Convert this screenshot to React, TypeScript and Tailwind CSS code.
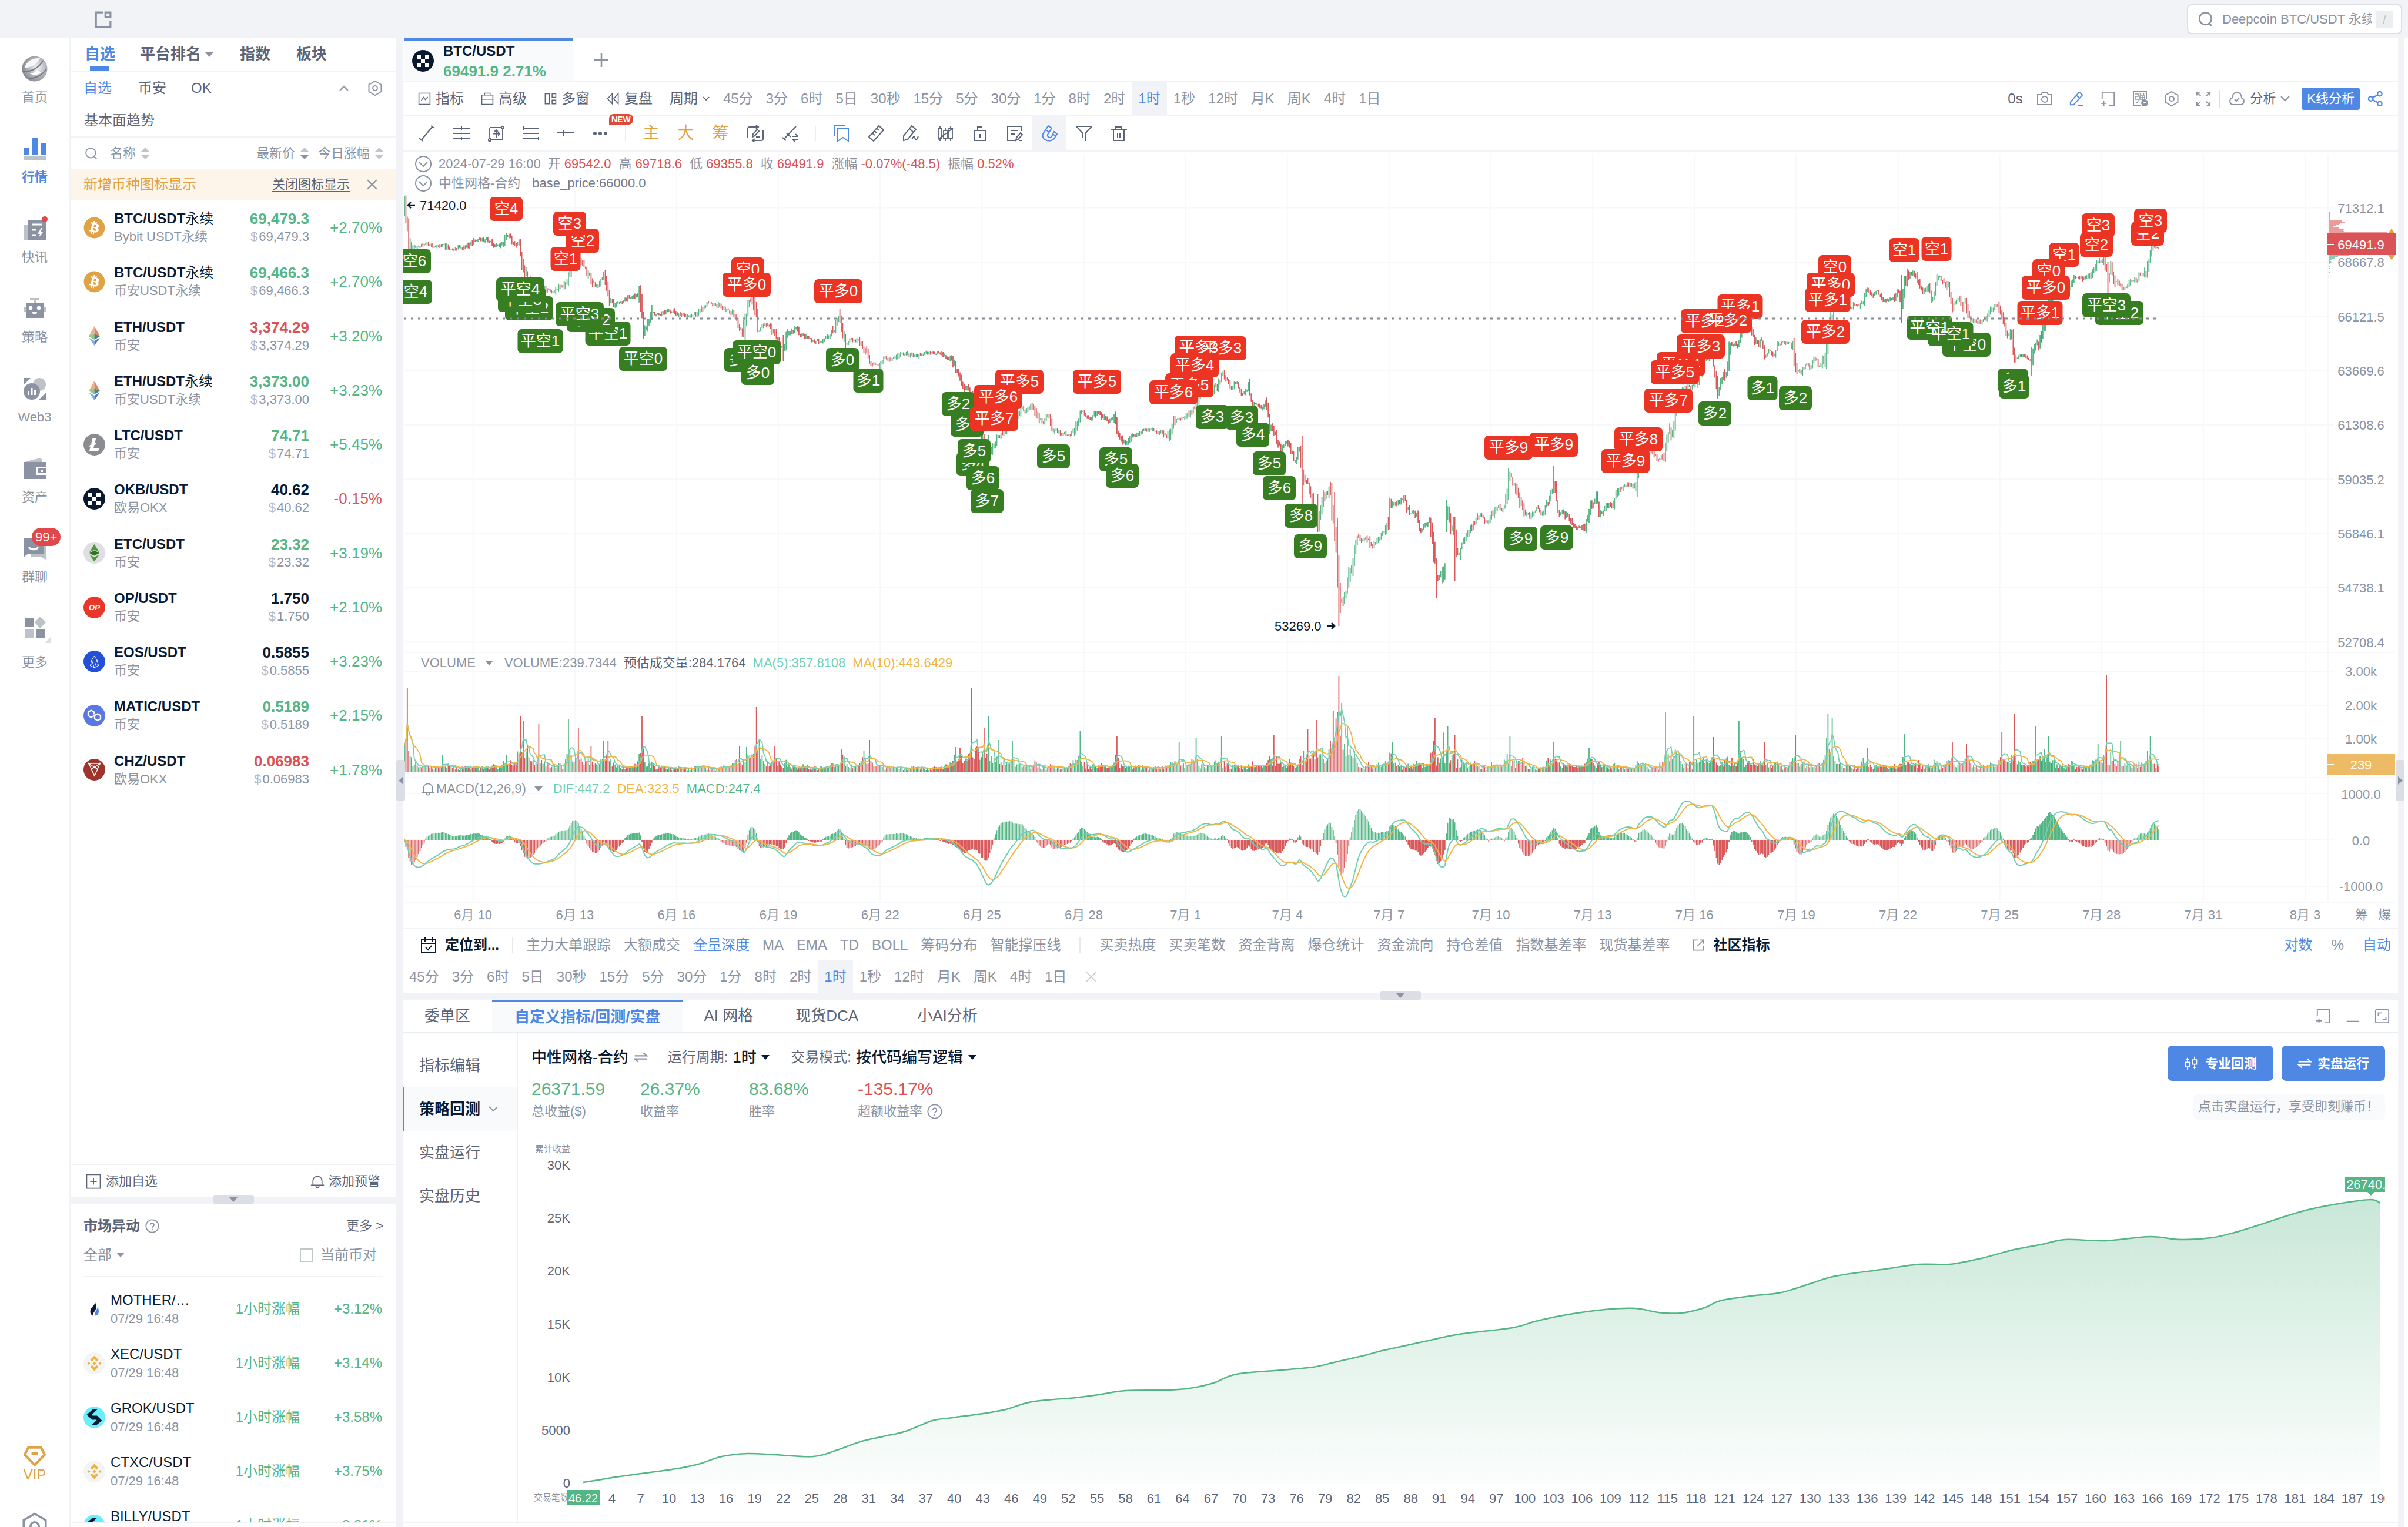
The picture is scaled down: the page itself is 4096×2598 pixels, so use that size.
import type { ReactNode } from "react"
import { FaBitcoin } from "react-icons/fa"

type Point = [number, number]

interface IconProps {
  children: ReactNode
  className?: string
  stroke?: number
  box?: number
}

// line icons share a 28 unit box
function Icon({ children, className = "size-7", stroke = 2, box = 28 }: IconProps) {
  return (
    <svg
      viewBox={`0 0 ${box} ${box}`}
      className={`shrink-0 ${className}`}
      fill="none"
      stroke="currentColor"
      strokeWidth={stroke}
      aria-hidden="true"
    >
      {children}
    </svg>
  )
}

function Caret({ className = "" }: { className?: string }) {
  return (
    <svg viewBox="0 0 14 8" className={`h-2 w-[14px] shrink-0 ${className}`} fill="currentColor" aria-hidden="true">
      <path d="M0 0h14L7 8z" />
    </svg>
  )
}

function Chevron({ className = "w-4" }: { className?: string }) {
  return (
    <svg viewBox="0 0 16 10" className={`h-[10px] shrink-0 ${className}`} fill="none" stroke="currentColor" strokeWidth={2} aria-hidden="true">
      <path d="M1 1l7 7 7-7" />
    </svg>
  )
}

function Sort({ down = false }: { down?: boolean }) {
  return (
    <svg viewBox="0 0 16 20" className="h-5 w-4 shrink-0" aria-hidden="true">
      <path d="M0 8h16L8 0z" fill="#c0c5ca" />
      <path d="M0 12h16l-8 8z" fill={down ? "#8b93a3" : "#c0c5ca"} />
    </svg>
  )
}

function HexIcon({ className = "size-7", stroke = 2 }: { className?: string; stroke?: number }) {
  return (
    <Icon className={className} stroke={stroke}>
      <path d="M14 2l10.500 6v12L14 26 3.500 20V8z" />
      <circle cx="14" cy="14" r="4" />
    </Icon>
  )
}

function HelpIcon({ className = "size-6" }: { className?: string }) {
  return (
    <Icon className={className}>
      <circle cx="14" cy="14" r="12.500" />
      <path d="M10.500 11.500a3.500 3.500 0 1 1 5 3.200c-1.200.6-1.500 1.300-1.500 2.600M14 19.500v2.200" />
    </Icon>
  )
}

function PopoutIcon({ className = "size-[26px]" }: { className?: string }) {
  return (
    <Icon className={className}>
      <path d="M3 14V2h22v24h-9M6 18v9M1 22.500h10" />
    </Icon>
  )
}

function BellIcon({ className = "size-6" }: { className?: string }) {
  return (
    <Icon className={className}>
      <path d="M5 21v-8a9 9 0 0 1 18 0v8M1 21.500h26M11 22v1.500a3 3 0 0 0 6 0V22" />
    </Icon>
  )
}

function Okx({ className = "size-[37px]" }: { className?: string }) {
  return (
    <svg viewBox="0 0 37 37" className={`shrink-0 ${className}`} aria-hidden="true">
      <circle cx="18.500" cy="18.500" r="18.500" fill="#0a1830" />
      <path fill="#fff" d="M8 8h7v7H8zM22 8h7v7h-7zM15 15h7v7h-7zM8 22h7v7H8zM22 22h7v7h-7z" />
    </svg>
  )
}

function CoinIcon({ coin }: { coin: string }) {
  if (coin === "btc") return <FaBitcoin className="size-[37px] shrink-0 text-[#dfa245]" aria-hidden="true" />
  if (coin === "okb") return <Okx />
  return (
    <svg viewBox="0 0 37 37" className="size-[37px] shrink-0" aria-hidden="true">
      {coin === "eth" && (
        <>
          <path d="M18.500 2L9 19l9.500-4z" fill="#eeb27a" />
          <path d="M18.500 2L28 19l-9.500-4z" fill="#e0826c" />
          <path d="M9 19l9.500-4v10z" fill="#8fc489" />
          <path d="M28 19l-9.500-4v10z" fill="#4e7f78" />
          <path d="M9 21.500l9.500 5.500v8z" fill="#6fb5e0" />
          <path d="M28 21.500L18.500 27v8z" fill="#5a6bd0" />
        </>
      )}
      {coin === "ltc" && (
        <>
          <circle cx="18.500" cy="18.500" r="18.500" fill="#8a8c92" />
          <path fill="#fff" d="M15.500 7h6l-2.300 9 2.600-1-.8 3-2.600 1-1.400 5.500h9.300l-1 4.500H10l2-7.500-2 .8.800-3 2-.8z" />
        </>
      )}
      {coin === "etc" && (
        <>
          <circle cx="18.500" cy="18.500" r="18.500" fill="#dfdfe3" />
          <path d="M18.500 4L10 17.500l8.500-4 8.500 4z" fill="#4c9a35" />
          <path d="M10 19l8.500-4.500L27 19l-8.500 4.500z" fill="#2f7321" />
          <path d="M10 21.500l8.500 4.500 8.500-4.500-8.500 12z" fill="#4c9a35" />
        </>
      )}
      {coin === "op" && (
        <>
          <circle cx="18.500" cy="18.500" r="18.500" fill="#e8362b" />
          <text x="18.500" y="23" textAnchor="middle" fontSize="13" fontWeight="700" fontStyle="italic" fill="#fff">
            OP
          </text>
        </>
      )}
      {coin === "eos" && (
        <>
          <circle cx="18.500" cy="18.500" r="18.500" fill="#2450d8" />
          <path
            d="M18.500 9L14 16l-2.500 9.500 7 3.500 7-3.500L23 16zM14 16l4.500 13L23 16M11.500 25.500L14 22M25.500 25.500L23 22"
            fill="none"
            stroke="#fff"
          />
        </>
      )}
      {coin === "matic" && (
        <>
          <circle cx="18.500" cy="18.500" r="18.500" fill="#5b78e0" />
          <path
            d="M18 16.500v-4L13 9.500l-5 3v6l5 3 11-6 5 3v5.500l-5 3-5-3v-4"
            fill="none"
            stroke="#fff"
            strokeWidth="2.300"
          />
        </>
      )}
      {coin === "chz" && (
        <>
          <circle cx="18.500" cy="18.500" r="18.500" fill="#9f342c" />
          <path d="M9 8h19l-9 21zM9 8l15 10M28 8L13.500 18M18.500 12.500L13.500 18l5 11 5.500-11z" fill="none" stroke="#fff" strokeWidth="1.300" />
          <circle cx="9" cy="8" r="1.500" fill="#fff" />
          <circle cx="28" cy="8" r="1.500" fill="#fff" />
        </>
      )}
      {coin === "huobi" && (
        <>
          <path d="M19.500 6c1 6-8 9-8 16.500 0 3.500 2 6 4.500 7-1-5 5.500-8 5.500-14 0-4-1-7.500-2-9.500z" fill="#0a1a33" />
          <path d="M24 15c-1 5-5.500 7.500-4.500 14.500 4 0 6.500-3 6.500-7.500 0-3-.8-5.500-2-7z" fill="#4f87e4" />
        </>
      )}
      {coin === "binance" && (
        <>
          <circle cx="18.500" cy="18.500" r="18.500" fill="#f3f4f5" />
          <path
            d="M18.500 5.500l7 7-3 3-4-4-4 4-3-3zM18.500 31.500l-7-7 3-3 4 4 4-4 3 3zM18.500 15.500l3 3-3 3-3-3zM9 16l2.500 2.500L9 21l-2.500-2.500zM28 16l2.500 2.500L28 21l-2.500-2.500z"
            fill="#eeb441"
          />
        </>
      )}
      {coin === "bitget" && (
        <>
          <circle cx="18.500" cy="18.500" r="18.500" fill="#6ceefa" />
          <path d="M15.500 5h8L14 14l8.500 8.500h-8L5.500 14zM21.500 32h-8l9-9-7.500-7.500h8l8.500 8.500z" fill="#0a1a33" />
        </>
      )}
    </svg>
  )
}

/* ---------- left rail ---------- */

const RAIL: { label: string; icon: ReactNode }[] = [
  {
    label: "首页",
    icon: (
      <svg viewBox="0 0 44 44" className="size-11" aria-hidden="true">
        <defs>
          <radialGradient id="globe" cx="0.6" cy="0.45" r="0.6">
            <stop offset="0" stopColor="#f4f4f6" />
            <stop offset="0.55" stopColor="#b7babf" />
            <stop offset="1" stopColor="#85888f" />
          </radialGradient>
        </defs>
        <circle cx="22" cy="22" r="21.500" fill="url(#globe)" />
        <path d="M5 20C8 9 18 3 31 4c-4 9-14 17-26 16z" fill="#f7f7f8" />
        <path d="M2 26c14 2 28-6 34-18M12 38c12 1 24-6 29-15" fill="none" stroke="#777a82" strokeWidth="2" />
        <path d="M14 30c6 0 9-3 12-6l7 4c-5 5-12 6-19 2z" fill="#fff" />
      </svg>
    ),
  },
  {
    label: "行情",
    icon: (
      <svg viewBox="0 0 38 38" className="size-[38px]" aria-hidden="true">
        <path fill="#4f87e4" d="M0 17h10v13H0zM14 1h11v29H14zM29 10h9v20h-9z" />
        <path fill="#bcc3c8" d="M0 32h38v6H0z" />
      </svg>
    ),
  },
  {
    label: "快讯",
    icon: (
      <svg viewBox="0 0 44 44" className="size-11" aria-hidden="true">
        <path fill="#bcc3c8" d="M4 15h8v27H4z" />
        <path fill="#8b93a3" d="M11 7h30v35H11z" />
        <path stroke="#fff" strokeWidth="3" d="M17 15h18M17 24h7M17 33h8" />
        <path fill="#fff" d="M33 21l-6 10h4l-2 6 7-9h-4l3-7z" />
        <circle cx="39" cy="6" r="5" fill="#e0484a" />
      </svg>
    ),
  },
  {
    label: "策略",
    icon: (
      <svg viewBox="0 0 38 38" className="size-[38px]" aria-hidden="true">
        <path fill="#bcc3c8" d="M11 1h16v4H11zM17 5h4v4h-4zM0 17h4v8H0zM34 17h4v8h-4z" />
        <path fill="#8b93a3" d="M4 9h30v26H4z" />
        <circle cx="12" cy="18" r="3.200" fill="#fff" />
        <circle cx="26" cy="18" r="3.200" fill="#fff" />
        <path fill="#fff" d="M15 25h8a4 4 0 0 1-8 0z" />
      </svg>
    ),
  },
  {
    label: "Web3",
    icon: (
      <svg viewBox="0 0 38 38" className="size-[38px]" aria-hidden="true">
        <circle cx="27" cy="12" r="11" fill="#bcc3c8" />
        <circle cx="14" cy="24" r="14" fill="#8b93a3" />
        <path fill="#8b93a3" d="M0 1h12L0 13zM38 26v12H26z" />
        <path fill="#fff" d="M7 23h3v7H7zM12.500 18h3v12h-3zM18 22h3v8h-3z" />
      </svg>
    ),
  },
  {
    label: "资产",
    icon: (
      <svg viewBox="0 0 38 38" className="size-[38px]" aria-hidden="true">
        <path fill="#bcc3c8" d="M4 7l26-6 2 7H4z" />
        <path fill="#8b93a3" d="M0 8h38v8H21v14h17v7H0z" />
        <path fill="#8b93a3" d="M24 19h14v8H24z" />
        <path fill="#fff" d="M29 21h4v4h-4z" />
      </svg>
    ),
  },
  {
    label: "群聊",
    icon: (
      <span className="relative">
        <svg viewBox="0 0 38 38" className="size-[38px]" aria-hidden="true">
          <path fill="#bcc3c8" d="M12 10h26v28l-8-4H12z" />
          <path fill="#8b93a3" d="M0 2h34v26H8l-8 6z" />
          <path d="M9 17c4 5 12 5 16 0" fill="none" stroke="#fff" strokeWidth="3" />
        </svg>
        <span className="absolute -top-4 left-[14px] rounded-full bg-[#e0484a] px-[6px] text-[22px] leading-[31px] text-white">
          99+
        </span>
      </span>
    ),
  },
  {
    label: "更多",
    icon: (
      <svg viewBox="0 0 56 48" className="h-12 w-14" aria-hidden="true">
        <path fill="#8b93a3" d="M11 6h15v15H11zM30 25h15v15H30z" />
        <path fill="#bcc3c8" d="M11 25h15v15H11zM37 3l10 10-10 10-9-10z" />
        <path fill="#dcdee4" d="M56 37v11H45z" />
      </svg>
    ),
  },
]

function Rail() {
  return (
    <nav className="flex w-[120px] shrink-0 flex-col items-center overflow-hidden border-r-2 border-[#f2f3f7] bg-white pt-[29px]">
      {RAIL.map((item) => (
        <a
          key={item.label}
          href="#"
          className={`flex h-[136px] shrink-0 flex-col items-center text-[22px] leading-[22px] ${
            item.label === "更多" ? "gap-[22px]" : "gap-4"
          } ${item.label === "行情" ? "font-bold text-[#4f87e4]" : "text-[#8b93a3]"}`}
        >
          <span className={`flex items-center ${item.label === "更多" ? "h-12" : "h-[45px]"}`}>{item.icon}</span>
          {item.label}
        </a>
      ))}
      <a href="#" className="mt-auto flex shrink-0 flex-col items-center text-2xl leading-[26px] text-[#dfa245]">
        <Icon className="size-[38px]" stroke={3}>
          <path d="M6 3.500h16l4.500 9L14 25.500 1.500 12.500zM10 11h8" />
        </Icon>
        VIP
      </a>
      <a href="#" aria-label="设置" className="mt-[50px] h-[26px] shrink-0 overflow-hidden text-[#8b93a3]">
        <HexIcon className="size-[50px]" stroke={2} />
      </a>
    </nav>
  )
}

/* ---------- watch list ---------- */

interface Coin {
  icon: string
  pair: string
  perp?: boolean
  venue: string
  price: string
  tone: "up" | "down" | "flat"
  change: string
}

const COINS: Coin[] = [
  { icon: "btc", pair: "BTC/USDT", perp: true, venue: "Bybit USDT永续", price: "69,479.3", tone: "up", change: "+2.70%" },
  { icon: "btc", pair: "BTC/USDT", perp: true, venue: "币安USDT永续", price: "69,466.3", tone: "up", change: "+2.70%" },
  { icon: "eth", pair: "ETH/USDT", venue: "币安", price: "3,374.29", tone: "down", change: "+3.20%" },
  { icon: "eth", pair: "ETH/USDT", perp: true, venue: "币安USDT永续", price: "3,373.00", tone: "up", change: "+3.23%" },
  { icon: "ltc", pair: "LTC/USDT", venue: "币安", price: "74.71", tone: "up", change: "+5.45%" },
  { icon: "okb", pair: "OKB/USDT", venue: "欧易OKX", price: "40.62", tone: "flat", change: "-0.15%" },
  { icon: "etc", pair: "ETC/USDT", venue: "币安", price: "23.32", tone: "up", change: "+3.19%" },
  { icon: "op", pair: "OP/USDT", venue: "币安", price: "1.750", tone: "flat", change: "+2.10%" },
  { icon: "eos", pair: "EOS/USDT", venue: "币安", price: "0.5855", tone: "flat", change: "+3.23%" },
  { icon: "matic", pair: "MATIC/USDT", venue: "币安", price: "0.5189", tone: "up", change: "+2.15%" },
  { icon: "chz", pair: "CHZ/USDT", venue: "欧易OKX", price: "0.06983", tone: "down", change: "+1.78%" },
]

const TONES = { up: "text-[#54b585]", down: "text-[#da5254]", flat: "text-[#0a1a33]" }

const ALERTS = [
  { icon: "huobi", pair: "MOTHER/…", change: "+3.12%" },
  { icon: "binance", pair: "XEC/USDT", change: "+3.14%" },
  { icon: "bitget", pair: "GROK/USDT", change: "+3.58%" },
  { icon: "binance", pair: "CTXC/USDT", change: "+3.75%" },
  { icon: "bitget", pair: "BILLY/USDT", change: "+3.21%" },
]

function Watchlist() {
  return (
    <section className="flex min-h-0 flex-1 flex-col bg-white">
      <div className="flex h-[57px] shrink-0 items-center border-b-2 border-[#f2f3f7] pl-6 text-[26px] font-bold text-[#5b6478]">
        <button className="relative flex h-full items-center text-[#4f87e4]">
          自选
          <span className="absolute bottom-0 left-[9px] h-[7px] w-[33px] bg-[#4f87e4]" />
        </button>
        <button className="ml-[42px] flex items-center gap-[7px]">
          平台排名 <Caret className="text-[#8b93a3]" />
        </button>
        <button className="ml-[45px]">指数</button>
        <button className="ml-[44px]">板块</button>
      </div>
      <div className="flex h-[56px] shrink-0 items-center pl-[22px] pr-[22px] text-2xl text-[#5b6478]">
        <button className="text-[#4f87e4]">自选</button>
        <button className="ml-[45px]">币安</button>
        <button className="ml-[42px]">OK</button>
        <button aria-label="收起" className="ml-auto text-[#8b93a3]">
          <Chevron className="w-[22px] rotate-180" />
        </button>
        <button aria-label="设置" className="ml-7 text-[#8b93a3]">
          <HexIcon />
        </button>
      </div>
      <div className="flex h-[56px] shrink-0 items-center border-b-2 border-[#f2f3f7] pl-[23px] text-2xl text-[#5b6478]">
        <button>基本面趋势</button>
      </div>
      <table className="w-full table-fixed">
        <colgroup>
          <col className="w-[278px]" />
          <col className="w-[128px]" />
          <col />
        </colgroup>
        <thead className="text-[22px] leading-[30px] text-[#8b93a3]">
          <tr className="h-[53px]">
            <th className="pl-[25px] font-normal">
              <span className="flex items-center">
                <Icon className="size-5" stroke={2.5}>
                  <circle cx="13" cy="13" r="11.500" />
                  <path d="M21 21l6 6" />
                </Icon>
                <span className="ml-[22px] mr-2">名称</span>
                <Sort />
              </span>
            </th>
            <th className="font-normal">
              <span className="flex items-center justify-end gap-2">
                最新价 <Sort down />
              </span>
            </th>
            <th className="pr-[21px] font-normal">
              <span className="flex items-center justify-end gap-2">
                今日涨幅 <Sort />
              </span>
            </th>
          </tr>
        </thead>
        <tbody>
          <tr className="h-[54px] bg-[#fdf5ea]">
            <td colSpan={3}>
              <span className="flex items-center pl-[22px] pr-[31px] text-2xl text-[#dfa245]">
                新增币种图标显示
                <button className="ml-auto text-[22px] leading-[30px] text-[#5b6478] underline underline-offset-4">
                  关闭图标显示
                </button>
                <button aria-label="关闭" className="ml-[28px] text-[#8b93a3]">
                  <Icon className="size-5" stroke={3}>
                    <path d="M3 3l22 22M25 3L3 25" />
                  </Icon>
                </button>
              </span>
            </td>
          </tr>
          {COINS.map((coin, i) => (
            <tr key={i} className="h-[92px] nth-[4n]:h-[93px]">
              <td className="pl-[22px]">
                <span className="flex items-center gap-[15px]">
                  <CoinIcon coin={coin.icon} />
                  <span className="whitespace-nowrap">
                    <span className="block text-2xl leading-8 font-bold text-[#0a1a33]">
                      {coin.pair}
                      {coin.perp && <span className="font-normal">永续</span>}
                    </span>
                    <span className="block text-[22px] leading-[30px] text-[#8b93a3]">{coin.venue}</span>
                  </span>
                </span>
              </td>
              <td className="text-right">
                <span className={`block text-[26px] leading-8 font-bold ${TONES[coin.tone]}`}>{coin.price}</span>
                <span className="block text-[22px] leading-[30px] text-[#8b93a3]">
                  <span className="mr-[2px] text-[#b4b9c3]">$</span>
                  {coin.price}
                </span>
              </td>
              <td
                className={`pr-6 text-right text-[26px] leading-8 ${
                  coin.change.startsWith("-") ? "text-[#da5254]" : "text-[#54b585]"
                }`}
              >
                {coin.change}
              </td>
            </tr>
          ))}
        </tbody>
      </table>
      <div className="mt-auto flex h-[57px] shrink-0 items-center justify-between border-t-2 border-[#f2f3f7] pl-[26px] pr-[27px] text-[22px] leading-[30px] text-[#5b6478]">
        <button className="flex items-center gap-2">
          <Icon className="size-[26px]">
            <path d="M1.500 1.500h25v25h-25zM14 8v12M8 14h12" />
          </Icon>
          添加自选
        </button>
        <button className="flex items-center gap-[7px]">
          <BellIcon />
          添加预警
        </button>
      </div>
    </section>
  )
}

function Handle() {
  return (
    <div className="relative h-[11px] shrink-0">
      <button
        aria-label="展开"
        className="absolute bottom-0 left-1/2 flex h-[15px] w-[70px] -translate-x-1/2 items-center justify-center rounded bg-[#dcdee5] text-[#8b93a3]"
      >
        <Caret />
      </button>
    </div>
  )
}

function MarketAlerts() {
  return (
    <section className="h-[542px] shrink-0 overflow-hidden bg-white px-[22px] pt-[18px]">
      <div className="flex h-10 items-center text-2xl font-bold text-[#5b6478]">
        市场异动
        <HelpIcon className="ml-[9px] size-6 text-[#8b93a3]" />
        <a href="#" className="ml-auto text-[22px] font-normal">
          更多 &gt;
        </a>
      </div>
      <div className="mt-2 flex h-[42px] items-center text-2xl text-[#8b93a3]">
        <label className="flex items-center gap-2">
          <select aria-label="筛选" className="appearance-none bg-transparent">
            <option>全部</option>
          </select>
          <Caret />
        </label>
        <label className="ml-auto flex items-center gap-3 pr-[11px]">
          <input type="checkbox" className="size-[23px] appearance-none border-2 border-[#c0c8c9]" />
          当前币对
        </label>
      </div>
      <ul className="mt-[15px] border-t-2 border-[#f2f3f7] pt-2">
        {ALERTS.map((alert) => (
          <li key={alert.pair} className="flex h-[92px] items-center">
            <CoinIcon coin={alert.icon} />
            <span className="ml-[9px]">
              <span className="block text-2xl leading-[33px] text-[#0a1a33]">{alert.pair}</span>
              <span className="block text-[22px] leading-8 text-[#8b93a3]">07/29 16:48</span>
            </span>
            <span className="ml-auto text-2xl text-[#54b585]">1小时涨幅</span>
            <span className="w-[142px] pr-[2px] text-right text-2xl text-[#54b585]">{alert.change}</span>
          </li>
        ))}
      </ul>
    </section>
  )
}

/* ---------- chart toolbars ---------- */

const FRAMES = [
  "45分", "3分", "6时", "5日", "30秒", "15分", "5分", "30分", "1分",
  "8时", "2时", "1时", "1秒", "12时", "月K", "周K", "4时", "1日",
]

function Frames() {
  return (
    <>
      {FRAMES.map((frame) => (
        <button
          key={frame}
          className={`h-full shrink-0 px-[11px] ${frame === "1时" ? "bg-[#f2f3f7] text-[#4f87e4]" : ""}`}
        >
          {frame}
        </button>
      ))}
    </>
  )
}

function ChartMenu() {
  return (
    <div className="flex h-[58px] shrink-0 items-center border-b-2 border-[#f2f3f7] pl-[26px] pr-[26px] text-2xl whitespace-nowrap text-[#8b93a3]">
      <div className="mr-3 flex items-center gap-[29px] text-[#5b6478]">
        <button className="flex items-center gap-2">
          <Icon className="size-[22px]">
            <path d="M2 2h24v24H2zM7 18l5-7 4 5 5-6" />
          </Icon>
          指标
        </button>
        <button className="flex items-center gap-2">
          <Icon className="size-[22px]">
            <path d="M2 6h24v20H2zM8 6V2h12v4M2 15h24" />
          </Icon>
          高级
        </button>
        <button className="flex items-center gap-2">
          <Icon className="size-[22px]">
            <path d="M3 3h9v22H3zM18 3h8v8h-8zM18 17h8v8h-8z" />
          </Icon>
          多窗
        </button>
        <button className="flex items-center gap-2">
          <Icon className="size-[22px]">
            <path d="M12 3L2 14l10 11zM25 3L15 14l10 11z" />
          </Icon>
          复盘
        </button>
        <button className="flex items-center gap-2">
          周期 <Chevron className="w-3" />
        </button>
      </div>
      <Frames />
      <span className="ml-auto w-[36px] text-[#5b6478]">0s</span>
      {TOP_ACTIONS.map((action) => (
        <button key={action.label} aria-label={action.label} className={`flex w-[54px] justify-center ${action.tone ?? ""}`}>
          {action.icon}
        </button>
      ))}
      <span className="mr-[14px] h-[30px] w-[2px] bg-[#dcdee5]" />
      <button className="mr-5 flex items-center gap-2 text-[22px] text-[#5b6478]">
        <Icon className="size-7 text-[#8b93a3]">
          <path d="M7 24a6 6 0 0 1-1-11.500C6 7 9.500 3 14 3s8 4 8 9.500A6 6 0 0 1 21 24zM10 15l3 3 5-6" />
        </Icon>
        分析
        <Chevron className="w-4 text-[#8b93a3]" />
      </button>
      <button className="mr-[13px] h-[38px] rounded bg-[#4f87e4] px-[9px] text-[22px] leading-[38px] text-white">K线分析</button>
      <button aria-label="分享" className="text-[#4f87e4]">
        <Icon className="size-[26px]" stroke={2.5}>
          <circle cx="6" cy="14" r="4" />
          <circle cx="22.500" cy="5" r="4" />
          <circle cx="22.500" cy="23" r="4" />
          <path d="M9.500 12L19 7M9.500 16l9.500 5" />
        </Icon>
      </button>
    </div>
  )
}

const TOP_ACTIONS: { label: string; tone?: string; icon: ReactNode }[] = [
  {
    label: "截图",
    icon: (
      <Icon>
        <path d="M2 7h6l2-4h8l2 4h6v17H2z" />
        <circle cx="14" cy="15" r="5" />
      </Icon>
    ),
  },
  {
    label: "画线",
    tone: "text-[#4f87e4]",
    icon: (
      <Icon className="size-[26px]">
        <path d="M3 20L19 2l6 5L9 25H3zM14 8l6 5M17 26h9" />
      </Icon>
    ),
  },
  { label: "弹出", icon: <PopoutIcon /> },
  {
    label: "弹幕",
    icon: (
      <Icon>
        <path d="M25 14V2H3v23h12" />
        <path d="M6 6h5v4H6v5h5c0 4-1 6-3 6M14 5l2 3M21 5l-2 3M14 9h8v6h-8zM14 12h8M18 9v9" strokeWidth="1.500" />
        <circle cx="22" cy="21" r="6" fill="currentColor" stroke="none" />
        <path d="M19 21h6" stroke="#fff" />
      </Icon>
    ),
  },
  { label: "设置", icon: <HexIcon /> },
  {
    label: "全屏",
    icon: (
      <Icon className="size-[26px]">
        <path d="M2 8V2h6M20 2h6v6M26 20v6h-6M8 26H2v-6M2 2l7 7M26 2l-7 7M26 26l-7-7M2 26l7-7" />
      </Icon>
    ),
  },
]

const DRAW_TOOLS: { label: string; icon?: ReactNode; text?: string; divider?: boolean; on?: boolean; blue?: boolean; isNew?: boolean }[] = [
  { label: "线段", icon: <path d="M5 25L23 3M1 22l6 5M21 1l6 4" /> },
  { label: "平行线", icon: <path d="M0 5h28M0 14h28M0 23h28M14 2v6M14 20v6" /> },
  {
    label: "矩形",
    icon: (
      <>
        <path d="M3 4h19M25 6v19H6M3 23V4M14 8v13M8 14.500h12M11 11l3-3 3 3M17 11.500l3 3-3 3" strokeWidth="1.800" />
        <circle cx="25" cy="4" r="2.200" />
        <circle cx="3" cy="25" r="2.200" />
      </>
    ),
  },
  { label: "通道", icon: <path d="M1 5h27M1 2v6M1 14h26M0 23h27M27 20v6" /> },
  { label: "水平线", icon: <path d="M0 13h28M11 8v10" /> },
  {
    label: "更多",
    isNew: true,
    icon: (
      <g fill="currentColor" stroke="none">
        <circle cx="5" cy="14" r="3" />
        <circle cx="14" cy="14" r="3" />
        <circle cx="23" cy="14" r="3" />
      </g>
    ),
  },
  { label: "主力", text: "主", divider: true },
  { label: "大单", text: "大" },
  { label: "筹码", text: "筹" },
  {
    label: "循环画线",
    icon: <path d="M1 22V6c0-2 1-3 3-3h14M15 0l4 3-4 3M27 8v15c0 2-1 3-3 3H10M13 23l-4 3 4 3M9 20l1-5 7-8 3 3-7 8zM15 20h6" />,
  },
  { label: "切换", icon: <path d="M3 24L24 2M8 14l7 6M1 21l6 5M17 19h10l-4-4M28 24H18l4 4" /> },
  { label: "书签", blue: true, divider: true, icon: <path d="M2 18V1h18M8 6h18v21l-9-6-9 6z" /> },
  { label: "标尺", icon: <path d="M2 20L19 1l8 7-17 19zM8 14l4 3M12 10l3 3M16 6l4 3" /> },
  { label: "画笔", icon: <path d="M2 26v-8L16 1l7 6L9 24zM12 6l7 6M16 24c2-4 4-6 5-3s2 6 4 2l2-4" /> },
  { label: "隐藏K线", icon: <path d="M2 5h6v18H2zM11 9h6v14h-6zM20 5h6v18h-6zM5 1v4M5 23v4M14 5v4M14 23v4M23 1v4M23 23v4M2 24L27 5" strokeWidth="1.800" /> },
  { label: "锁定", icon: <path d="M5 9h18v17H5zM10 9V3h8M14 15v6" /> },
  { label: "笔记", icon: <path d="M26 10V2H2v24h12M7 9h12M7 15h7M16 26l1-5 7-8 3 3-7 8zM21 26h6" /> },
  { label: "磁吸", on: true, blue: true, icon: <path d="M12 1l6 4-7 11c-1 4 4 7 7 3l4-8 5 4-5 8C16 30 0 26 3 15zM8 8l6 4M20 15l5 4" /> },
  { label: "筛选", icon: <path d="M1 2h26L17 13v14M1 2l10 11v9" /> },
  { label: "删除", icon: <path d="M0 8h28M5 8h18v18H5zM9 8V3h10v5M12 14v7M16 14v7" /> },
]

function DrawBar() {
  return (
    <div className="flex h-[60px] shrink-0 items-center border-b-2 border-[#f2f3f7] pl-[11px] text-[#5b6478]">
      {DRAW_TOOLS.map((tool) => (
        <div key={tool.label} className="flex h-full items-center">
          {tool.divider && <span className="mx-[13px] h-[26px] w-[2px] bg-[#e8efee]" />}
          <button
            aria-label={tool.label}
            className={`relative flex h-full w-[59px] items-center justify-center text-[28px] ${tool.on ? "bg-[#f2f3f7]" : ""} ${
              tool.blue ? "text-[#4f87e4]" : tool.text ? "text-[#dfa245]" : ""
            }`}
          >
            {tool.text ?? <Icon>{tool.icon}</Icon>}
            {tool.isNew && (
              <span className="absolute -top-1 left-[45px] rounded-lg rounded-bl-none bg-[#e0483c] px-1 text-sm leading-[18px] font-bold text-white">
                NEW
              </span>
            )}
          </button>
        </div>
      ))}
    </div>
  )
}

/* ---------- price chart ---------- */

const TRACK: Point[] = [
  [687, 352], [692, 373], [695, 409], [698, 420], [713, 418], [727, 415], [738, 420], [753, 418], [772, 424], [794, 419],
  [801, 413], [812, 407], [830, 409], [845, 418], [856, 415], [862, 400], [867, 404], [872, 415], [882, 415], [886, 438],
  [892, 460], [898, 477], [930, 493], [941, 497], [950, 487], [959, 489], [967, 469], [974, 442], [981, 431], [987, 453],
  [991, 447], [998, 460], [1006, 478], [1018, 489], [1028, 467], [1035, 504], [1044, 519], [1059, 511], [1070, 506], [1081, 504],
  [1088, 498], [1092, 530], [1095, 566], [1101, 555], [1108, 533], [1121, 535], [1143, 529], [1162, 537], [1180, 537], [1195, 524],
  [1202, 517], [1224, 519], [1235, 528], [1246, 531], [1256, 551], [1265, 570], [1270, 529], [1273, 508], [1283, 519], [1290, 566],
  [1298, 551], [1309, 555], [1320, 573], [1332, 595], [1338, 573], [1353, 559], [1364, 570], [1379, 579], [1393, 582], [1408, 573],
  [1419, 560], [1428, 537], [1432, 559], [1438, 584], [1452, 577], [1463, 584], [1474, 602], [1482, 619], [1496, 621], [1504, 610],
  [1519, 612], [1533, 602], [1559, 606], [1577, 601], [1600, 602], [1618, 613], [1633, 643], [1640, 657], [1653, 672], [1662, 697],
  [1669, 745], [1678, 781], [1686, 767], [1695, 748], [1706, 737], [1714, 727], [1728, 716], [1736, 694], [1747, 701], [1754, 686],
  [1761, 705], [1773, 719], [1782, 705], [1791, 730], [1806, 736], [1820, 741], [1830, 723], [1839, 700], [1848, 707], [1856, 713],
  [1867, 700], [1878, 709], [1885, 719], [1894, 707], [1900, 735], [1909, 750], [1918, 754], [1926, 742], [1948, 731], [1970, 735],
  [1990, 742], [1997, 711], [2014, 711], [2029, 696], [2043, 672], [2058, 669], [2073, 653], [2080, 634], [2087, 651], [2095, 661],
  [2104, 649], [2113, 670], [2124, 657], [2129, 688], [2139, 684], [2146, 696], [2154, 686], [2159, 723], [2165, 735], [2172, 746],
  [2179, 766], [2187, 750], [2194, 758], [2202, 785], [2211, 758], [2215, 820], [2221, 812], [2227, 832], [2235, 867], [2242, 902],
  [2248, 847], [2253, 843], [2262, 836], [2268, 886], [2274, 944], [2277, 1022], [2280, 1018], [2286, 1022], [2292, 983], [2301, 956],
  [2308, 909], [2316, 921], [2325, 913], [2334, 933], [2345, 915], [2360, 898], [2365, 859], [2375, 859], [2387, 847], [2397, 871],
  [2408, 873], [2417, 906], [2426, 890], [2434, 894], [2439, 937], [2444, 991], [2452, 968], [2458, 952], [2461, 867], [2467, 894],
  [2474, 898], [2478, 956], [2485, 929], [2496, 910], [2503, 898], [2518, 875], [2529, 890], [2537, 878], [2548, 859], [2559, 871],
  [2567, 808], [2572, 816], [2581, 836], [2592, 871], [2603, 878], [2614, 863], [2623, 875], [2636, 851], [2643, 816], [2651, 875],
  [2658, 867], [2669, 886], [2680, 898], [2695, 898], [2704, 867], [2715, 843], [2721, 878], [2732, 863], [2746, 855], [2752, 832],
  [2768, 824], [2781, 828], [2785, 797], [2795, 774], [2808, 767], [2820, 781], [2831, 774], [2839, 727], [2844, 738], [2849, 712],
  [2858, 661], [2876, 657], [2889, 646], [2899, 617], [2912, 595], [2918, 646], [2922, 668], [2930, 635], [2937, 632], [2941, 595],
  [2950, 584], [2956, 595], [2963, 559], [2973, 551], [2981, 573], [2991, 588], [2996, 577], [3001, 606], [3009, 595], [3016, 608],
  [3024, 584], [3035, 584], [3048, 584], [3053, 624], [3062, 635], [3073, 617], [3079, 628], [3086, 606], [3094, 624], [3105, 610],
  [3108, 581], [3114, 537], [3125, 526], [3138, 528], [3154, 519], [3167, 519], [3175, 493], [3185, 504], [3193, 495], [3206, 511],
  [3222, 509], [3229, 493], [3234, 522], [3239, 486], [3245, 466], [3255, 467], [3261, 478], [3271, 497], [3279, 486], [3285, 511],
  [3292, 489], [3297, 467], [3303, 482], [3313, 486], [3321, 522], [3333, 508], [3338, 529], [3342, 504], [3349, 544], [3362, 548],
  [3371, 548], [3381, 537], [3391, 522], [3397, 519], [3407, 537], [3415, 566], [3422, 566], [3426, 610], [3436, 606], [3446, 606],
  [3456, 617], [3459, 588], [3469, 584], [3475, 551], [3485, 515], [3501, 497], [3520, 489], [3529, 471], [3543, 475], [3559, 467],
  [3569, 446], [3580, 446], [3586, 478], [3590, 449], [3595, 478], [3605, 486], [3614, 493], [3624, 475], [3634, 478], [3640, 464],
  [3650, 466], [3656, 435], [3661, 420], [3673, 420],
]

// bars that reach well past their neighbours: x, high, low
const WICKS: [number, number, number][] = [
  [1095, 530, 577], [1108, 519, 545], [1265, 545, 574], [1333, 570, 614], [1428, 525, 550], [1682, 740, 800], [2215, 742, 870],
  [2242, 840, 905], [2277, 944, 1065], [2281, 992, 1043], [2444, 950, 1018], [2461, 850, 905], [2474, 880, 989], [2567, 796, 851],
  [2643, 792, 838], [2785, 795, 845], [2922, 640, 679], [3115, 500, 545], [3234, 468, 549], [3456, 590, 639], [3586, 446, 505],
]

// x, top, r = down bar, g = up bar
const VOLUME_PEAKS: [number, number, "r" | "g"][] = [
  [693, 1170, "r"], [752, 1285, "g"], [860, 1285, "g"], [884, 1219, "r"], [891, 1227, "r"], [897, 1269, "r"], [917, 1232, "r"],
  [968, 1224, "g"], [983, 1238, "r"], [1005, 1270, "r"], [1026, 1260, "r"], [1034, 1260, "r"], [1093, 1219, "r"], [1259, 1270, "r"],
  [1271, 1271, "g"], [1287, 1203, "r"], [1291, 1260, "g"], [1319, 1270, "r"], [1432, 1275, "r"], [1469, 1277, "g"], [1478, 1259, "r"],
  [1625, 1271, "g"], [1632, 1272, "r"], [1653, 1171, "r"], [1673, 1238, "r"], [1680, 1218, "g"], [1697, 1259, "g"], [1723, 1260, "g"],
  [1837, 1243, "g"], [1900, 1252, "r"], [2005, 1262, "g"], [2035, 1256, "g"], [2078, 1252, "g"], [2168, 1250, "r"], [2225, 1240, "r"],
  [2238, 1225, "r"], [2269, 1210, "r"], [2277, 1150, "r"], [2282, 1196, "g"], [2292, 1235, "g"], [2370, 1262, "g"], [2442, 1222, "r"],
  [2462, 1236, "g"], [2474, 1250, "r"], [2568, 1252, "g"], [2643, 1262, "g"], [2704, 1272, "g"], [2834, 1212, "g"], [2881, 1218, "g"],
  [2915, 1254, "r"], [2957, 1226, "g"], [3002, 1262, "r"], [3054, 1250, "r"], [3109, 1214, "g"], [3116, 1222, "g"], [3177, 1272, "g"],
  [3239, 1248, "g"], [3322, 1262, "r"], [3345, 1266, "r"], [3404, 1246, "r"], [3427, 1214, "r"], [3462, 1236, "g"], [3485, 1252, "g"],
  [3568, 1266, "g"], [3584, 1148, "r"], [3606, 1260, "g"], [3652, 1277, "g"], [3657, 1253, "g"],
]

const STEP = 173.13 / 72
const VOLUME_BASE = 1314
const MACD_BASE = 1429

function seeded(seed: number) {
  let s = seed
  return () => {
    s = (s * 16807) % 2147483647
    return s / 2147483647
  }
}

function trackAt(x: number) {
  let i = 1
  while (i < TRACK.length - 1 && TRACK[i][0] < x) i++
  const [x0, y0] = TRACK[i - 1]
  const [x1, y1] = TRACK[i]
  return y0 + ((y1 - y0) * (x - x0)) / (x1 - x0)
}

// the price scale is logarithmic
const toPrice = (y: number) => 71312.1 * Math.exp(-0.00040926 * (y - 353.6))

function ema(values: number[], span: number) {
  const k = 2 / (span + 1)
  let last = values[0]
  return values.map((v) => (last = v * k + last * (1 - k)))
}

function average(values: number[], span: number) {
  return values.map((_, i) => {
    const part = values.slice(Math.max(0, i - span + 1), i + 1)
    return part.reduce((a, b) => a + b, 0) / part.length
  })
}

function buildChart() {
  const random = seeded(4711)
  const count = Math.floor((3673 - 687) / STEP) + 1
  const xs = Array.from({ length: count }, (_, i) => 688 + i * STEP)
  let up = ""
  let down = ""
  let volUp = ""
  let volDown = ""
  let last = trackAt(688)
  const closes: number[] = []
  const volumes: number[] = []
  xs.forEach((x) => {
    const slope = Math.abs(trackAt(x + 6) - trackAt(x - 6))
    const amp = 3 + slope * 0.22
    const close = trackAt(x) + (random() - 0.5) * amp * 1.4
    let high = Math.min(last, close) - random() * amp
    let low = Math.max(last, close) + random() * amp
    const wick = WICKS.find((w) => Math.abs(w[0] - x) <= STEP / 2)
    if (wick) {
      high = wick[1]
      low = wick[2]
    }
    const isUp = close < last
    const bar = `M${x.toFixed(1)} ${high.toFixed(1)}V${low.toFixed(1)}`
    if (isUp) up += bar
    else down += bar

    const peak = VOLUME_PEAKS.find((p) => Math.abs(p[0] - x) <= STEP / 2)
    let volume = 3 + random() * 7 + slope * 0.5 * random()
    VOLUME_PEAKS.forEach((p) => {
      volume += (VOLUME_BASE - p[1]) * 0.22 * random() * Math.exp(-Math.abs(p[0] - x) / 12)
    })
    if (peak) volume = VOLUME_BASE - peak[1]
    const volumeBar = `M${x.toFixed(1)} ${VOLUME_BASE}v${(-volume).toFixed(1)}`
    if (peak ? peak[2] === "g" : isUp) volUp += volumeBar
    else volDown += volumeBar

    closes.push(toPrice(close))
    volumes.push(volume)
    last = close
  })

  const fast = ema(closes, 12)
  const slow = ema(closes, 26)
  const dif = fast.map((v, i) => v - slow[i])
  const dea = ema(dif, 9)
  const scale = 0.0785
  let histUp = ""
  let histDown = ""
  dif.forEach((v, i) => {
    const h = (v - dea[i]) * 2 * scale
    if (h >= 0) histUp += `M${xs[i].toFixed(1)} ${MACD_BASE}v${(-h - 1).toFixed(1)}`
    else histDown += `M${xs[i].toFixed(1)} ${MACD_BASE + 1}v${(-h + 1).toFixed(1)}`
  })
  const line = (values: number[], base: number, k: number) =>
    "M" + values.map((v, i) => `${xs[i].toFixed(1)} ${(base - v * k).toFixed(1)}`).join("L")

  return {
    up,
    down,
    volUp,
    volDown,
    histUp,
    histDown,
    ma5: line(average(volumes, 5), VOLUME_BASE, 1),
    ma10: line(average(volumes, 10), VOLUME_BASE, 1),
    dif: line(dif, MACD_BASE, scale),
    dea: line(dea, MACD_BASE, scale),
  }
}

const CHART = buildChart()

const DATES = [
  "6月 10", "6月 13", "6月 16", "6月 19", "6月 22", "6月 25", "6月 28", "7月 1", "7月 4", "7月 7",
  "7月 10", "7月 13", "7月 16", "7月 19", "7月 22", "7月 25", "7月 28", "7月 31", "8月 3",
]

const PRICES = ["71312.1", "68667.8", "66121.5", "63669.6", "61308.6", "59035.2", "56846.1", "54738.1", "52708.4"]

const LOWER_AXIS: [string, number][] = [
  ["3.00k", 1142], ["2.00k", 1200], ["1.00k", 1257], ["1000.0", 1351], ["0.0", 1430], ["-1000.0", 1508],
]

// label, centre x, centre y, kind: s = sell, b = buy, t = caption only; painted in order
const MARKS: [string, number, number, "s" | "b" | "t"][] = [
  ["空4", 861, 355, "s"], ["空2", 991, 409, "s"], ["空3", 969, 380, "s"], ["空1", 962, 440, "s"],
  ["平空6", 692, 444, "b"], ["平空4", 694, 496, "b"],
  ["平空2", 900, 524, "b"], ["平空3", 888, 510, "b"], ["平空4", 885, 492, "b"], ["平空1", 919, 580, "b"],
  ["平空1", 1034, 567, "b"], ["平空2", 1005, 544, "b"], ["平空3", 986, 534, "b"], ["平空0", 1094, 610, "b"],
  ["空0", 1272, 458, "s"], ["平多0", 1270, 484, "s"], ["平多0", 1426, 495, "s"],
  ["多0", 1260, 612, "b"], ["多0", 1289, 634, "b"], ["平空0", 1287, 599, "b"],
  ["多0", 1433, 612, "b"], ["多1", 1477, 647, "b"],
  ["多2", 1630, 687, "b"], ["多3", 1645, 722, "b"], ["多4", 1655, 789, "b"], ["多5", 1657, 767, "b"],
  ["多6", 1672, 813, "b"], ["多7", 1679, 852, "b"],
  ["平多5", 1734, 649, "s"], ["平多6", 1698, 675, "s"], ["平多7", 1691, 712, "s"], ["多5", 1792, 776, "b"],
  ["平多5", 1866, 649, "s"], ["多5", 1898, 781, "b"], ["多6", 1909, 809, "b"],
  ["平多3", 2039, 591, "s"], ["平多3", 2079, 592, "s"], ["平多3", 2039, 591, "t"],
  ["平多5", 2023, 655, "s"], ["平多4", 2032, 621, "s"], ["平多6", 1996, 667, "s"],
  ["多3", 2062, 709, "b"], ["多3", 2112, 710, "b"], ["多4", 2131, 739, "b"],
  ["多5", 2159, 788, "b"], ["多6", 2176, 830, "b"], ["多8", 2213, 877, "b"], ["多9", 2229, 929, "b"],
  ["平多9", 2566, 761, "s"], ["平多9", 2643, 756, "s"], ["多9", 2587, 916, "b"], ["多9", 2648, 914, "b"],
  ["平多8", 2787, 747, "s"], ["平多9", 2765, 784, "s"], ["平多7", 2838, 681, "s"],
  ["平多4", 2859, 619, "s"], ["平多5", 2849, 633, "s"], ["平多3", 2893, 589, "s"],
  ["平多1", 2960, 521, "s"], ["平多2", 2900, 546, "s"], ["平多2", 2939, 545, "s"], ["平多2", 2900, 546, "t"],
  ["多2", 2917, 703, "b"], ["多1", 2998, 660, "b"], ["多2", 3054, 677, "b"],
  ["空0", 3121, 454, "s"], ["平多0", 3114, 484, "s"], ["平多1", 3109, 510, "s"], ["平多2", 3105, 564, "s"],
  ["空1", 3239, 425, "s"], ["空1", 3294, 423, "s"],
  ["平空0", 3345, 586, "b"], ["平空1", 3282, 557, "b"], ["平空1", 3318, 568, "b"], ["平空1", 3282, 557, "t"],
  ["多1", 3424, 647, "b"], ["多1", 3426, 657, "b"],
  ["空1", 3511, 433, "s"], ["空0", 3485, 461, "s"], ["平多0", 3480, 489, "s"], ["平多1", 3470, 532, "s"],
  ["空3", 3569, 383, "s"], ["空2", 3566, 416, "s"], ["空2", 3653, 397, "s"], ["空3", 3658, 375, "s"],
  ["平空2", 3605, 532, "b"], ["平空3", 3583, 519, "b"],
]

function Mark({ mark }: { mark: (typeof MARKS)[number] }) {
  const [label, x, y, kind] = mark
  const width = (label.length === 3 ? 82 : 56) - (label.endsWith("1") ? 5 : 0)
  return (
    <g>
      {kind !== "t" && (
        <rect x={x - width / 2} y={y - 20} width={width} height={41} rx={7} fill={kind === "s" ? "#eb3424" : "#377d22"} />
      )}
      <text x={x} y={y + 9} fontSize={26} textAnchor="middle" fill="#fff">
        {label}
      </text>
    </g>
  )
}

const ASKS = [2, 2, 2, 2, 2, 2, 2, 22, 27, 20, 18, 12, 8, 17, 26, 24, 26, 30]
const BIDS = [34, 16, 10, 5, 3, 4, 5, 3, 1, 2, 1, 3, 1, 1, 2, 1, 1]

function PriceChart() {
  return (
    <div className="relative shrink-0 text-[22px] leading-[30px]">
      <svg viewBox="685 258 3394 1321" className="w-full" role="img" aria-label="BTC/USDT K线图">
        <g stroke="#f7f8fa" strokeWidth={2}>
          {DATES.map((date, i) => (
            <path key={date} d={`M${804.7 + i * 173.13} 262V1535`} />
          ))}
          <path d="M3960 262V1535" />
          {PRICES.map((price, i) => (
            <path key={price} d={`M687 ${353.6 + i * 92.33}H3968`} />
          ))}
          {[1142, 1200, 1257, 1350, 1429, 1508].map((y) => (
            <path key={y} d={`M687 ${y}H3968`} />
          ))}
          {[1110, 1323, 1535].map((y) => (
            <path key={y} d={`M687 ${y}H4076`} />
          ))}
        </g>
        <g fill="none" strokeWidth={1.8}>
          <path d={CHART.up} stroke="#54b585" />
          <path d={CHART.down} stroke="#da5a5c" />
          <path d={CHART.volUp} stroke="#54b585" />
          <path d={CHART.volDown} stroke="#da5a5c" />
          <path d={CHART.histUp} stroke="#54b585" />
          <path d={CHART.histDown} stroke="#da5a5c" />
          <path d={CHART.ma5} stroke="#6fcfb3" />
          <path d={CHART.ma10} stroke="#f2b544" />
          <path d={CHART.dif} stroke="#6fcfb3" strokeWidth={2} />
          <path d={CHART.dea} stroke="#f2b544" strokeWidth={2} />
        </g>
        <g fontSize={22} fill="#0a1a33">
          <text x={714} y={357}>71420.0</text>
          <text x={2168} y={1073}>53269.0</text>
          <path d="M706 349H694M699 344l-5 5 5 5M2258 1065h12M2265 1060l5 5-5 5" fill="none" stroke="#0a1a33" strokeWidth={2.5} />
        </g>
        {MARKS.map((mark, i) => (
          <Mark key={i} mark={mark} />
        ))}
        <path d="M687 542H3673" stroke="#85888f" strokeWidth={3} strokeDasharray="4 8" />

        <g fontSize={22} fill="#8b93a3" textAnchor="middle">
          {PRICES.map((price, i) => (
            <text key={price} x={4016} y={362 + i * 92.33}>
              {price}
            </text>
          ))}
          {LOWER_AXIS.map(([label, y]) => (
            <text key={label} x={4016} y={y + 8}>
              {label}
            </text>
          ))}
          {DATES.map((date, i) => (
            <text key={date} x={804.7 + i * 173.13} y={1564}>
              {date}
            </text>
          ))}
          <text x={4017} y={1564}>筹</text>
          <text x={4056} y={1564}>爆</text>
        </g>
        <g fill="#ea9c9d">
          {ASKS.map((w, i) => (
            <rect key={i} x={3961} y={361 + i * 2} width={w} height={2} />
          ))}
        </g>
        <rect x={3961} y={394} width={100} height={3} fill="#ea9c9d" />
        <g fill="#86d0b4">
          {BIDS.map((w, i) => (
            <rect key={i} x={3961} y={434 + i * 2} width={w} height={2} />
          ))}
        </g>
        <path d="M4062 397l6-8 6 8zM4062 434l6 8 6-8z" fill="#dfa245" />
        <rect x={3959} y={397} width={117} height={37} fill="#da5457" />
        <rect x={3959} y={1282} width={115} height={36} fill="#edbb65" />
        <path d="M3959 416h11M3959 1301h11" stroke="#fff" strokeWidth={2} />
        <g fontSize={22} fill="#fff" textAnchor="middle">
          <text x={4016} y={424}>69491.9</text>
          <text x={4016} y={1309}>239</text>
        </g>
      </svg>

      <div className="absolute top-[6px] left-[21px] flex items-center whitespace-nowrap text-[#8b93a3]">
        <LegendToggle />
        <span className="ml-3 mr-3">2024-07-29 16:00</span>
        {QUOTE.map(([name, value]) => (
          <span key={name} className="mr-[13px]">
            {name} <span className="text-[#da5254]">{value}</span>
          </span>
        ))}
      </div>
      <div className="absolute top-[39px] left-[21px] flex items-center whitespace-nowrap text-[#8b93a3]">
        <LegendToggle />
        <span className="ml-3 mr-5">中性网格-合约</span>
        <span className="text-[#767c89]">base_price:66000.0</span>
      </div>
      <div className="absolute top-[64.7%] left-[31px] flex items-center whitespace-nowrap text-[#8b93a3]">
        VOLUME
        <Caret className="ml-4 mr-[19px]" />
        VOLUME:239.7344
        <span className="ml-3 text-[#5b6478]">预估成交量:284.1764</span>
        <span className="ml-3 text-[#6fcfb3]">MA(5):357.8108</span>
        <span className="ml-3 text-[#f2b544]">MA(10):443.6429</span>
      </div>
      <div className="absolute top-[80.9%] left-[31px] flex items-center whitespace-nowrap text-[#8b93a3]">
        <BellIcon className="mr-[2px] size-6" />
        MACD(12,26,9)
        <Caret className="ml-[14px] mr-[18px]" />
        <span className="text-[#6fcfb3]">DIF:447.2</span>
        <span className="ml-3 text-[#f2b544]">DEA:323.5</span>
        <span className="ml-3 text-[#54b585]">MACD:247.4</span>
      </div>
    </div>
  )
}

const QUOTE = [
  ["开", "69542.0"],
  ["高", "69718.6"],
  ["低", "69355.8"],
  ["收", "69491.9"],
  ["涨幅", "-0.07%(-48.5)"],
  ["振幅", "0.52%"],
]

function LegendToggle() {
  return (
    <button aria-label="展开">
      <Icon>
        <circle cx="14" cy="14" r="13" />
        <path d="M7 11l7 7 7-7" />
      </Icon>
    </button>
  )
}

const INDICATORS = ["主力大单跟踪", "大额成交", "全量深度", "MA", "EMA", "TD", "BOLL", "筹码分布", "智能撑压线"]
const DATA_INDICATORS = ["买卖热度", "买卖笔数", "资金背离", "爆仓统计", "资金流向", "持仓差值", "指数基差率", "现货基差率"]

function IndicatorBar() {
  return (
    <div className="shrink-0 border-t-2 border-[#f2f3f7] text-2xl whitespace-nowrap text-[#8b93a3]">
      <div className="flex h-[53px] items-center gap-[22px] pl-[30px] pr-3">
        <button className="flex items-center gap-[14px] font-bold text-[#0a1a33]">
          <Icon className="size-7">
            <path d="M2 5h24v21H2zM2 11h24M8 1v7M20 1v7M9 18l4 4 6-7" />
          </Icon>
          定位到...
        </button>
        <span className="h-[26px] w-[2px] bg-[#e6e9ee]" />
        {INDICATORS.map((name) => (
          <button key={name} className={name === "全量深度" ? "text-[#4f87e4]" : ""}>
            {name}
          </button>
        ))}
        <span className="mx-[10px] h-[26px] w-[2px] bg-[#e6e9ee]" />
        {DATA_INDICATORS.map((name) => (
          <button key={name}>{name}</button>
        ))}
        <button className="ml-4 flex items-center gap-[14px] font-bold text-[#0a1a33]">
          <Icon className="size-[22px] text-[#8b93a3]">
            <path d="M12 3H3v22h22v-9M12 16L25 3M17 3h8v8" />
          </Icon>
          社区指标
        </button>
        <button className="ml-auto text-[#4f87e4]">对数</button>
        <button className="mx-[10px]">%</button>
        <button className="text-[#4f87e4]">自动</button>
      </div>
      <div className="flex h-[56px] items-center">
        <Frames />
        <button aria-label="关闭" className="ml-5 text-[#c0c5ca]">
          <Icon className="size-5">
            <path d="M3 3l22 22M25 3L3 25" />
          </Icon>
        </button>
      </div>
    </div>
  )
}

/* ---------- back test ---------- */

const EQUITY: Point[] = [
  [992, 2523], [1024, 2518], [1041, 2515], [1076, 2510], [1149, 2500], [1188, 2492], [1228, 2479], [1272, 2474], [1319, 2476], [1384, 2479],
  [1424, 2468], [1463, 2454], [1502, 2445], [1541, 2436], [1586, 2418], [1620, 2413], [1672, 2406], [1711, 2399], [1755, 2386], [1829, 2379],
  [1868, 2374], [1915, 2367], [1985, 2366], [2024, 2363], [2064, 2354], [2103, 2339], [2181, 2332], [2233, 2327], [2273, 2318], [2325, 2306],
  [2351, 2299], [2429, 2282], [2482, 2271], [2573, 2260], [2612, 2249], [2664, 2238], [2730, 2229], [2782, 2227], [2821, 2234], [2860, 2235],
  [2899, 2226], [2926, 2214], [2978, 2206], [3030, 2200], [3082, 2184], [3122, 2172], [3200, 2161], [3265, 2152], [3317, 2152], [3370, 2142],
  [3422, 2128], [3474, 2118], [3513, 2110], [3579, 2112], [3657, 2105], [3709, 2110], [3761, 2107], [3801, 2098], [3840, 2086], [3892, 2069],
  [3931, 2058], [3984, 2048], [4033, 2042], [4049, 2048],
]

// Catmull-Rom spline through the points
function smooth(points: Point[]) {
  return points
    .map(([x, y], i) => {
      if (i === 0) return `M${x} ${y}`
      const before = points[Math.max(0, i - 2)]
      const from = points[i - 1]
      const after = points[Math.min(points.length - 1, i + 1)]
      const c1 = [from[0] + (x - before[0]) / 6, from[1] + (y - before[1]) / 6]
      const c2 = [x - (after[0] - from[0]) / 6, y - (after[1] - from[1]) / 6]
      return `C${c1.map((n) => n.toFixed(1)).join(" ")} ${c2.map((n) => n.toFixed(1)).join(" ")} ${x} ${y}`
    })
    .join("")
}

const TRADES = Array.from({ length: 63 }, (_, i) => 4 + i * 3)
const EQUITY_AXIS = ["30K", "25K", "20K", "15K", "10K", "5000", "0"]

function EquityChart() {
  const curve = smooth(EQUITY)
  return (
    <svg viewBox="881 1910 3198 680" className="w-full" role="img" aria-label="累计收益">
      <defs>
        <linearGradient id="equity" x1="0" y1="0" x2="0" y2="1">
          <stop offset="0" stopColor="#54b585" stopOpacity="0.32" />
          <stop offset="1" stopColor="#54b585" stopOpacity="0.02" />
        </linearGradient>
        <clipPath id="plot">
          <rect x="881" y="1910" width="3176" height="680" />
        </clipPath>
      </defs>
      <path d={`${curve}V2525H992Z`} fill="url(#equity)" />
      <path d={curve} fill="none" stroke="#54b585" strokeWidth={2.5} />
      <g fontSize={15} fill="#8b93a3">
        <text x={910} y={1961}>累计收益</text>
        <text x={908} y={2554}>交易笔数</text>
      </g>
      <g fontSize={22} fill="#5b6478" textAnchor="end">
        {EQUITY_AXIS.map((label, i) => (
          <text key={label} x={970} y={1991 + i * 90.2}>
            {label}
          </text>
        ))}
      </g>
      <g clipPath="url(#plot)" fontSize={22} textAnchor="middle" fill="#5b6478">
        {TRADES.map((trade) => (
          <text key={trade} x={1041 + (trade - 4) * 16.175} y={2558}>
            {trade}
          </text>
        ))}
        <path d="M3988 2003h80v26h-29l-6 6-6-6h-39z" fill="#54b585" />
        <rect x={964} y={2536} width={57} height={26} fill="#54b585" />
        <text x={3991} y={2024} textAnchor="start" fill="#fff">26740.0</text>
        <text x={992} y={2557} fontSize={20} fill="#fff">46.22</text>
      </g>
    </svg>
  )
}

const STATS = [
  { value: "26371.59", label: "总收益($)", tone: "text-[#54b585]" },
  { value: "26.37%", label: "收益率", tone: "text-[#54b585]" },
  { value: "83.68%", label: "胜率", tone: "text-[#54b585]" },
  { value: "-135.17%", label: "超额收益率", tone: "text-[#da5254]" },
]

interface PickerProps {
  label: string
  option: string
  className?: string
}

function Picker({ label, option, className = "" }: PickerProps) {
  return (
    <label className={`flex items-center text-2xl text-[#5b6478] ${className}`}>
      {label}
      <select className="ml-2 appearance-none bg-transparent text-[26px] font-medium text-[#0a1a33]">
        <option>{option}</option>
      </select>
      <Caret className="ml-2 text-[#0a1a33]" />
    </label>
  )
}

const SIDE_TABS = ["指标编辑", "策略回测", "实盘运行", "实盘历史"]

function SwapIcon({ className = "size-6" }: { className?: string }) {
  return (
    <Icon className={className} stroke={2.5}>
      <path d="M2 11h24l-7-6M26 17H2l7 6" />
    </Icon>
  )
}

function BackTest() {
  return (
    <section className="flex min-h-0 flex-1 flex-col overflow-hidden bg-white">
      <div className="flex h-[57px] shrink-0 items-center border-b-2 border-[#e8eef0] pr-[14px] text-[26px] text-[#5b6478]">
        <button className="px-[37px]">委单区</button>
        <button className="h-full border-t-4 border-[#4f87e4] bg-[#f9fafc] px-[38px] font-bold text-[#4f87e4]">
          自定义指标/回测/实盘
        </button>
        <button className="px-9">AI 网格</button>
        <button className="px-9">现货DCA</button>
        <button className="ml-7 px-9">小AI分析</button>
        <div className="ml-auto flex items-center gap-[25px] text-[#8b93a3]">
          <button aria-label="弹出">
            <PopoutIcon />
          </button>
          <button aria-label="最小化">
            <Icon className="size-6">
              <path d="M2 24h24" />
            </Icon>
          </button>
          <button aria-label="最大化">
            <Icon className="size-[26px]">
              <rect x="2" y="2" width="24" height="24" rx="2" />
              <path d="M7 13V8h6M15 20h6v-5" />
            </Icon>
          </button>
        </div>
      </div>
      <div className="flex min-h-0 flex-1">
        <div className="flex w-[196px] shrink-0 flex-col border-r-2 border-[#eef1f3] pt-[18px] text-[26px] text-[#5b6478]">
          {SIDE_TABS.map((tab) => (
            <button
              key={tab}
              className={`flex h-[74px] items-center border-l-2 pl-[26px] ${
                tab === "策略回测" ? "border-[#4f87e4] bg-[#f9fafc] font-bold text-[#0a1a33]" : "border-transparent"
              }`}
            >
              {tab}
              {tab === "策略回测" && <Chevron className="ml-[14px] w-4 text-[#8b93a3]" />}
            </button>
          ))}
        </div>
        <div className="min-w-0 flex-1">
          <div className="flex justify-between pl-[23px] pr-[22px] pt-[21px]">
            <div>
              <div className="flex h-10 items-center text-[26px] text-[#0a1a33]">
                <span className="font-medium">中性网格-合约</span>
                <button aria-label="切换" className="ml-[9px] text-[#8b93a3]">
                  <SwapIcon />
                </button>
                <Picker label="运行周期:" option="1时" className="ml-[34px]" />
                <Picker label="交易模式:" option="按代码编写逻辑" className="ml-[36px]" />
              </div>
              <dl className="mt-[14px] grid grid-cols-[repeat(4,185px)]">
                {STATS.map((stat) => (
                  <div key={stat.label} className="flex flex-col-reverse">
                    <dt className="flex items-center gap-2 text-[22px] leading-9 text-[#8b93a3]">
                      {stat.label}
                      {stat.label === "超额收益率" && <HelpIcon className="size-[26px]" />}
                    </dt>
                    <dd className={`text-[30px] leading-10 ${stat.tone}`}>{stat.value}</dd>
                  </div>
                ))}
              </dl>
            </div>
            <div className="flex flex-col items-end">
              <div className="flex gap-[14px] text-[22px] font-bold text-white">
                <button className="flex h-[60px] w-[180px] items-center justify-center gap-3 rounded-lg bg-[#4f87e4]">
                  <Icon className="size-6">
                    <path d="M3 12h8v9H3zM17 7h8v9h-8zM7 3v9M7 21v6M21 1v6M21 16v10M4 6h6M18 22h6" />
                  </Icon>
                  专业回测
                </button>
                <button className="flex h-[60px] w-[176px] items-center justify-center gap-[10px] rounded-lg bg-[#4f87e4]">
                  <SwapIcon />
                  实盘运行
                </button>
              </div>
              <p className="mt-[22px] rounded-lg bg-[#f9fafc] pr-[10px] pl-2 text-[22px] leading-[44px] text-[#8b93a3]">
                点击实盘运行，享受即刻赚币！
              </p>
            </div>
          </div>
          <EquityChart />
        </div>
      </div>
    </section>
  )
}

function SymbolTabs() {
  return (
    <div className="flex h-[75px] shrink-0 items-center border-b-2 border-[#f2f3f7] pl-[2px]">
      <button className="flex h-full w-72 items-center gap-4 border-t-4 border-[#4f87e4] bg-[#f9fafc] pl-[14px] text-left font-bold">
        <Okx />
        <span>
          <span className="block text-2xl leading-[34px] text-[#0a1a33]">BTC/USDT</span>
          <span className="block text-[26px] leading-[34px] text-[#54b585]">69491.9 2.71%</span>
        </span>
      </button>
      <button aria-label="添加" className="ml-9 text-[#8b93a3]">
        <Icon className="size-6" stroke={3}>
          <path d="M14 0v28M0 14h28" />
        </Icon>
      </button>
    </div>
  )
}

function TopBar() {
  return (
    <header className="flex h-[65px] shrink-0 items-center justify-between pl-[160px] pr-[10px]">
      <button aria-label="窗口" className="text-[#8b93a3]">
        <Icon className="size-[30px]" stroke={3}>
          <path d="M14 3H3v23h23V16" />
          <path d="M18 3h8v7h-8z" />
        </Icon>
      </button>
      <label className="flex h-[51px] w-[366px] items-center rounded-lg border-2 border-[#dcdfe5] bg-white pl-[17px] pr-[13px] text-[#8b93a3]">
        <Icon className="size-[25px]" stroke={3}>
          <circle cx="14" cy="13" r="11.500" />
          <path d="M21 22l5 5" />
        </Icon>
        <input
          aria-label="搜索"
          placeholder="Deepcoin BTC/USDT 永续"
          className="ml-4 w-[255px] min-w-0 text-[22px] placeholder:text-[#8b93a3]"
        />
        <kbd className="ml-auto flex h-[30px] w-[30px] shrink-0 items-center justify-center rounded bg-[#eceff0] font-[Liberation_Sans] text-xl text-[#b9c3c2]">
          /
        </kbd>
      </label>
    </header>
  )
}

export default function App() {
  return (
    <div className="flex h-screen flex-col overflow-hidden bg-[#f2f3f7] font-['Liberation_Sans','Noto_Sans_CJK_SC',sans-serif]">
      <TopBar />
      <div className="flex min-h-0 flex-1">
        <Rail />
        <aside className="flex w-[554px] shrink-0 flex-col">
          <Watchlist />
          <Handle />
          <MarketAlerts />
          <div className="mt-[2px] h-[6px] shrink-0 bg-white" />
        </aside>
        <div className="relative w-[11px] shrink-0">
          <button
            aria-label="收起侧栏"
            className="absolute top-[1228px] left-0 z-10 flex h-[70px] w-[15px] items-center justify-center rounded bg-[#dcdee5] text-[#8b93a3]"
          >
            <Caret className="rotate-90" />
          </button>
        </div>
        <main className="flex min-w-0 flex-1 flex-col">
          <div className="flex shrink-0 flex-col bg-white">
            <SymbolTabs />
            <ChartMenu />
            <DrawBar />
            <PriceChart />
            <IndicatorBar />
          </div>
          <Handle />
          <BackTest />
          <div className="mt-[2px] h-[6px] shrink-0 bg-white" />
        </main>
        <div className="relative w-[11px] shrink-0">
          <button
            aria-label="展开侧栏"
            className="absolute top-[1228px] right-0 z-10 flex h-[70px] w-[15px] items-center justify-center rounded bg-[#dcdee5] text-[#8b93a3]"
          >
            <Caret className="-rotate-90" />
          </button>
        </div>
        <div className="w-[6px] shrink-0 bg-white" />
      </div>
    </div>
  )
}
